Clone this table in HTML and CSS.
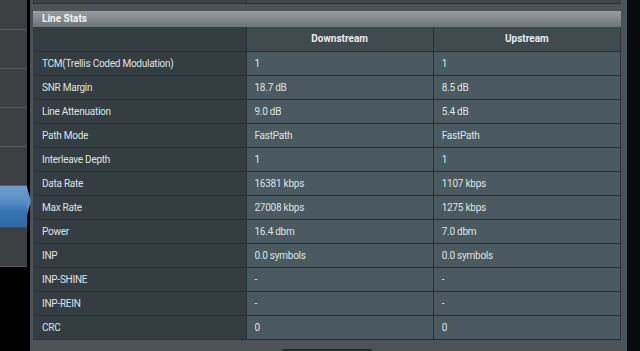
FILE: index.html
```html
<!DOCTYPE html>
<html>
<head>
<meta charset="utf-8">
<link rel="stylesheet" href="styles.css">
</head>
<body>
<div class="screen">
  <nav class="sidebar">
    <div class="side-item first"></div>
    <div class="side-item"></div>
    <div class="side-item"></div>
    <div class="side-item"></div>
    <div class="side-item"></div>
    <div class="side-item active"></div>
    <div class="side-item"></div>
  </nav>
  <main class="panel">
    <div class="prev-row"><span class="prev-cell label"></span><span class="prev-cell"></span></div>
    <div class="section-title">Line Stats</div>
    <table class="stats">
      <thead>
        <tr><th class="label"></th><th>Downstream</th><th>Upstream</th></tr>
      </thead>
      <tbody>
        <tr><td class="label">TCM(Trellis Coded Modulation)</td><td>1</td><td>1</td></tr>
        <tr><td class="label">SNR Margin</td><td>18.7 dB</td><td>8.5 dB</td></tr>
        <tr><td class="label">Line Attenuation</td><td>9.0 dB</td><td>5.4 dB</td></tr>
        <tr><td class="label">Path Mode</td><td>FastPath</td><td>FastPath</td></tr>
        <tr><td class="label">Interleave Depth</td><td>1</td><td>1</td></tr>
        <tr><td class="label">Data Rate</td><td>16381 kbps</td><td>1107 kbps</td></tr>
        <tr><td class="label">Max Rate</td><td>27008 kbps</td><td>1275 kbps</td></tr>
        <tr><td class="label">Power</td><td>16.4 dbm</td><td>7.0 dbm</td></tr>
        <tr><td class="label">INP</td><td>0.0 symbols</td><td>0.0 symbols</td></tr>
        <tr><td class="label">INP-SHINE</td><td>-</td><td>-</td></tr>
        <tr><td class="label">INP-REIN</td><td>-</td><td>-</td></tr>
        <tr><td class="label">CRC</td><td>0</td><td>0</td></tr>
      </tbody>
    </table>
    <div class="footer"><span class="button"></span></div>
  </main>
  <div class="edge"></div>
</div>
</body>
</html>
```

FILE: styles.css
```css
* { box-sizing: border-box; }
html, body { margin: 0; padding: 0; background: #000; }
body {
  width: 640px;
  height: 351px;
  overflow: hidden;
  font-family: Roboto, "Liberation Sans", sans-serif;
  font-size: 10px;
  letter-spacing: -0.25px;
  color: #dde2e4;
}
.screen {
  display: flex;
  height: 351px;
}
.sidebar {
  width: 27px;
  flex: none;
  display: flex;
  flex-direction: column;
  align-self: flex-start;
}
.side-item {
  position: relative;
  flex: none;
  height: 39px;
  background: #3d4043;
  border-bottom: 1px solid #585c5f;
}
.side-item.first { height: 30px; }
.side-item.active {
  height: 42px;
  background: linear-gradient(#6c9dd2 0%, #5b8ec6 38%, #3875b6 58%, #2f69a6 100%);
  border-bottom: 1px solid #2a4e78;
}
.side-item.active::after {
  content: "";
  position: absolute;
  right: -4px;
  top: 1px;
  border-top: 14px solid transparent;
  border-bottom: 14px solid transparent;
  border-left: 4px solid #5b8ec6;
}
.panel {
  width: 597px;
  flex: none;
  margin-left: 3px;
  background: #4b5357;
  padding: 0 6px 0 3px;
  display: flex;
  flex-direction: column;
}
.prev-row {
  flex: none;
  display: flex;
  height: 4px;
  border-bottom: 1px solid #2a3236;
}
.prev-cell { flex: 1; background: #40484c; border-left: 1px solid #2a3236; }
.prev-cell.label { flex: none; width: 213px; background: #3a4246; }
.section-title {
  flex: none;
  margin-top: 7px;
  height: 16px;
  line-height: 16px;
  padding-left: 9px;
  font-weight: bold;
  font-size: 10px;
  letter-spacing: 0;
  color: #f2f4f5;
  background: linear-gradient(#969ea2, #6b7479);
}
.stats {
  flex: none;
  border-collapse: collapse;
  width: 588px;
  table-layout: fixed;
}
.stats th, .stats td {
  height: 24px;
  padding: 0 0 0 8px;
  text-align: left;
  font-weight: normal;
  background: #4a5a60;
  border: 1px solid #263035;
  border-top: none;
  color: #dde3e5;
  white-space: nowrap;
}
.stats th {
  text-align: center;
  padding: 0;
  font-weight: bold;
  letter-spacing: 0;
  background: #404b50;
  color: #e9eced;
}
.stats .label {
  width: 213px;
  background: #343d42;
  padding-left: 9px;
  border-left: none;
}
.stats th.label { background: #343d42; }
.stats tr > :last-child { border-right-color: #2d363a; }
.footer {
  flex: 1;
  display: flex;
  justify-content: center;
  padding-top: 9px;
}
.button {
  width: 90px;
  height: 6px;
  background: #23292c;
  border-radius: 2px 2px 0 0;
}
.edge {
  flex: 1;
  background: #070b0d;
}
```
